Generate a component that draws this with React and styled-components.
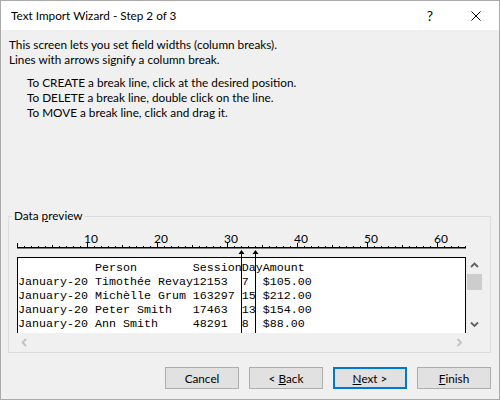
import React from "react"
import styled, { createGlobalStyle } from "styled-components"

const CHAR = 7
const RULER_CHARS = 64
const UI_FONT = '"Lato", "Liberation Sans", sans-serif'
const UI_SIZE = "11.75px"

const rows = [
  "           Person        SessionDayAmount",
  "January-20 Timothée Revay12153  7  $105.00",
  "January-20 Michèlle Grum 163297 15 $212.00",
  "January-20 Peter Smith   17463  13 $154.00",
  "January-20 Ann Smith     48291  8  $88.00",
]

const breaks = [32, 34]

const GlobalStyle = createGlobalStyle`
  html, body {
    margin: 0;
    padding: 0;
    overflow: hidden;
  }
  body {
    font-family: ${UI_FONT};
    font-size: ${UI_SIZE};
    color: #000;
  }
`

const Window = styled.div`
  box-sizing: border-box;
  width: 500px;
  height: 400px;
  border: 1px solid #aaaaaa;
  background: #f0f0f0;
  display: flex;
  flex-direction: column;
`

const TitleBar = styled.div`
  height: 29px;
  background: #fff;
  display: flex;
  align-items: center;
  padding-left: 10px;
`

const Title = styled.div`
  flex: 1;
  font-size: ${UI_SIZE};
`

const TitleButton = styled.div`
  width: 46px;
  height: 29px;
  display: flex;
  align-items: center;
  justify-content: center;
  font-size: 14px;
`

const Body = styled.div`
  flex: 1;
  padding: 7px 8px 0 7px;
  display: flex;
  flex-direction: column;
`

const Paragraph = styled.div`
  line-height: 15px;
  padding-left: 1px;
`

const Steps = styled.div`
  margin-top: 8px;
  margin-left: 19px;
  line-height: 15px;
`

const Group = styled.fieldset`
  margin: 88px 0 0 0;
  padding: 0 0 1px 0;
  min-width: 0;
  border: 1px solid #dcdcdc;
`

const Legend = styled.legend`
  margin-left: 3px;
  padding: 0 2px;
  line-height: 16px;
  font-size: ${UI_SIZE};
`

const PreviewArea = styled.div`
  position: relative;
  margin: 8px 0 0 8px;
`

const RulerSvg = styled.svg`
  display: block;
  width: 452px;
  height: 18px;
  overflow: visible;
`

const Frame = styled.div`
  margin-top: 7px;
  display: grid;
  grid-template-columns: 449px 17px;
  grid-template-rows: 76px 18px;
`

const DataBox = styled.div`
  box-sizing: border-box;
  background: #fff;
  border: 1px solid #000;
  border-bottom: none;
  padding-top: 3px;
  overflow: hidden;
  font-family: "Liberation Mono", "Courier New", monospace;
  font-size: 11.67px;
  line-height: 14px;
  white-space: pre;
`

const VScroll = styled.div`
  display: grid;
  grid-template-rows: 17px 16px 1fr 17px;
  justify-items: center;
  align-items: center;
`

const Thumb = styled.div`
  width: 15px;
  height: 16px;
  background: #cdcdcd;
`

const HScroll = styled.div`
  display: flex;
  align-items: center;
  justify-content: space-between;
  padding: 0 3px 0 4px;
`

const BreakMarker = styled.svg`
  position: absolute;
  top: 18px;
  width: 7px;
  height: 83px;
`

const Buttons = styled.div`
  margin-top: 14px;
  display: flex;
  justify-content: flex-end;
  gap: 10px;
`

const Button = styled.button`
  box-sizing: border-box;
  width: 74px;
  height: 22px;
  padding: 0;
  background: #e1e1e1;
  border: ${(p) => (p.$default ? "2px solid #0078d7" : "1px solid #adadad")};
  font-family: ${UI_FONT};
  font-size: ${UI_SIZE};
  color: #000;
`

const Chevron = ({ dir, color }) => {
  const pts = {
    up: "1,5 4.5,1.5 8,5",
    down: "1,1.5 4.5,5 8,1.5",
    left: "5,1 1.5,4.5 5,8",
    right: "1.5,1 5,4.5 1.5,8",
  }[dir]
  const vertical = dir === "up" || dir === "down"
  return (
    <svg width={vertical ? 9 : 7} height={vertical ? 7 : 9}>
      <polyline points={pts} fill="none" stroke={color} strokeWidth="1.8" />
    </svg>
  )
}

const Ruler = () => {
  const ticks = []
  for (let i = 0; i <= RULER_CHARS; i++) {
    const h = i % 10 === 0 ? 4 : i % 5 === 0 ? 2 : 1
    ticks.push(<rect key={i} x={i * CHAR} y={15 - h} width="1" height={h} fill="#000" />)
  }
  const labels = [10, 20, 30, 40, 50, 60]
  return (
    <RulerSvg>
      <rect x="0" y="15" width={RULER_CHARS * CHAR + 1} height="1.5" fill="#000" />
      {ticks}
      {labels.map((n) => (
        <text key={n} x={n * CHAR - 3} y="11" fontSize="12" fontFamily={UI_FONT}>
          {n}
        </text>
      ))}
    </RulerSvg>
  )
}

const Break = ({ col }) => (
  <BreakMarker style={{ left: col * CHAR - 3 }}>
    <polygon points="3.5,0 0.5,4 6.5,4" fill="#000" />
    <rect x="3" y="2" width="1" height="81" fill="#000" />
  </BreakMarker>
)

const CloseIcon = () => (
  <svg width="10" height="10">
    <path d="M0.5 0.5 L9.5 9.5 M9.5 0.5 L0.5 9.5" stroke="#000" strokeWidth="1" />
  </svg>
)

const App = () => {
  return (
    <Window>
      <GlobalStyle />
      <TitleBar>
        <Title>Text Import Wizard - Step 2 of 3</Title>
        <TitleButton>?</TitleButton>
        <TitleButton>
          <CloseIcon />
        </TitleButton>
      </TitleBar>
      <Body>
        <Paragraph>
          This screen lets you set field widths (column breaks).
          <br />
          Lines with arrows signify a column break.
        </Paragraph>
        <Steps>
          To CREATE a break line, click at the desired position.
          <br />
          To DELETE a break line, double click on the line.
          <br />
          To MOVE a break line, click and drag it.
        </Steps>
        <Group>
          <Legend>
            Data <u>p</u>review
          </Legend>
          <PreviewArea>
            <Ruler />
            <Frame>
              <DataBox>{rows.join("\n")}</DataBox>
              <VScroll>
                <Chevron dir="up" color="#606060" />
                <Thumb />
                <span />
                <Chevron dir="down" color="#606060" />
              </VScroll>
              <HScroll>
                <Chevron dir="left" color="#c2c2c2" />
                <Chevron dir="right" color="#c2c2c2" />
              </HScroll>
            </Frame>
            {breaks.map((c) => (
              <Break key={c} col={c} />
            ))}
          </PreviewArea>
        </Group>
        <Buttons>
          <Button>Cancel</Button>
          <Button>
            &lt; <u>B</u>ack
          </Button>
          <Button $default>
            <u>N</u>ext &gt;
          </Button>
          <Button>
            <u>F</u>inish
          </Button>
        </Buttons>
      </Body>
    </Window>
  )
}

export default App
